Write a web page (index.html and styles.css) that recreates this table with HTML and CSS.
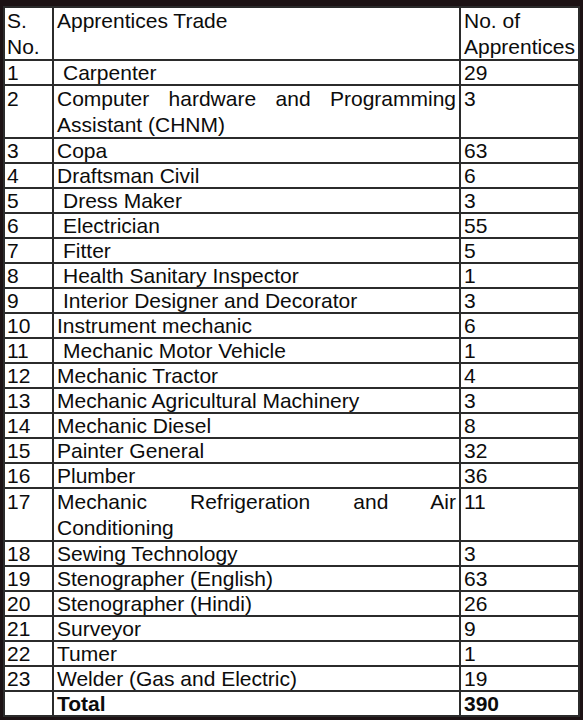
FILE: index.html
```html
<!DOCTYPE html>
<html>
<head>
<meta charset="utf-8">
<link rel="stylesheet" href="styles.css">
</head>
<body>
<table class="tbl">
  <colgroup><col class="c1"><col class="c2"><col class="c3"></colgroup>
  <tr class="two"><td>S.<br>No.</td><td>Apprentices Trade</td><td>No. of<br>Apprentices</td></tr>
  <tr><td>1</td><td class="ind">Carpenter</td><td>29</td></tr>
  <tr class="two"><td>2</td><td class="just">Computer hardware and Programming Assistant (CHNM)</td><td>3</td></tr>
  <tr><td>3</td><td>Copa</td><td>63</td></tr>
  <tr><td>4</td><td>Draftsman Civil</td><td>6</td></tr>
  <tr><td>5</td><td class="ind">Dress Maker</td><td>3</td></tr>
  <tr><td>6</td><td class="ind">Electrician</td><td>55</td></tr>
  <tr><td>7</td><td class="ind">Fitter</td><td>5</td></tr>
  <tr><td>8</td><td class="ind">Health Sanitary Inspector</td><td>1</td></tr>
  <tr><td>9</td><td class="ind">Interior Designer and Decorator</td><td>3</td></tr>
  <tr><td>10</td><td>Instrument mechanic</td><td>6</td></tr>
  <tr><td>11</td><td class="ind">Mechanic Motor Vehicle</td><td>1</td></tr>
  <tr><td>12</td><td>Mechanic Tractor</td><td>4</td></tr>
  <tr><td>13</td><td>Mechanic Agricultural Machinery</td><td>3</td></tr>
  <tr><td>14</td><td>Mechanic Diesel</td><td>8</td></tr>
  <tr><td>15</td><td>Painter General</td><td>32</td></tr>
  <tr><td>16</td><td>Plumber</td><td>36</td></tr>
  <tr class="two"><td>17</td><td class="just">Mechanic Refrigeration and Air Conditioning</td><td>11</td></tr>
  <tr><td>18</td><td>Sewing Technology</td><td>3</td></tr>
  <tr><td>19</td><td>Stenographer (English)</td><td>63</td></tr>
  <tr><td>20</td><td>Stenographer (Hindi)</td><td>26</td></tr>
  <tr><td>21</td><td>Surveyor</td><td>9</td></tr>
  <tr><td>22</td><td>Tumer</td><td>1</td></tr>
  <tr><td>23</td><td>Welder (Gas and Electric)</td><td>19</td></tr>
  <tr class="total"><td></td><td>Total</td><td>390</td></tr>
</table>
</body>
</html>
```
FILE: styles.css
```css
html, body {
  background: #1c1214;
}
body {
  margin: 0;
  padding: 6px 3px 0 3px;
}
.tbl {
  width: 577px;
  table-layout: fixed;
  border-collapse: collapse;
  background: #fff;
  font-family: "Liberation Sans", Arial, sans-serif;
  font-size: 21px;
  color: #0c0c0c;
}
.c1 { width: 49px; }
.c3 { width: 119px; }
.tbl td {
  border: 2px solid #2b2b2b;
  padding: 0 3px;
  height: 23px;
  line-height: 23px;
  vertical-align: top;
  overflow: hidden;
  white-space: nowrap;
}
.tbl td:first-child {
  padding-left: 2px;
}
.tbl tr.two td {
  height: 51px;
  line-height: 25.5px;
  white-space: normal;
}
.tbl td.ind {
  padding-left: 9px;
}
.tbl td.just {
  text-align: justify;
}
.tbl tr.total td {
  font-weight: bold;
}
```
